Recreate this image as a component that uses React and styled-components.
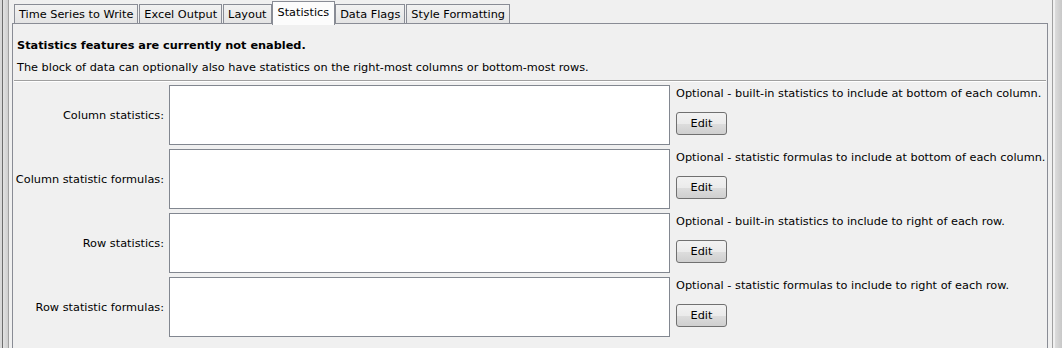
import React from "react";
import styled, { createGlobalStyle } from "styled-components";

const Global = createGlobalStyle`
  html, body { margin: 0; padding: 0; background: #f0f0f0; }
  body { font-family: "DejaVu Sans", Verdana, sans-serif; font-size: 11.3px; color: #000; }
`;

const Window = styled.div`
  display: flex;
  width: 1062px;
  height: 348px;
  overflow: hidden;
  background: #f0f0f0;
`;

const LeftEdge = styled.div`
  width: 9px;
  flex: none;
  box-sizing: border-box;
  border-left: 2px solid #d8d8d8;
  border-right: 1px solid #a0a0a0;
  background: linear-gradient(to right, #6d6d6d 0 1px, #e2e2e2 1px, #cfcfcf 100%);
`;

const RightEdge = styled.div`
  width: 10px;
  flex: none;
  box-sizing: border-box;
  border-left: 1px solid #a0a0a0;
  margin-left: 4px;
  background: linear-gradient(to right, #f0f0f0 0 2px, #dcdcdc 2px, #c8c8c8 100%);
`;

const Main = styled.div`
  flex: 1;
  display: flex;
  flex-direction: column;
  padding-left: 3px;
  min-width: 0;
`;

const TabBar = styled.div`
  display: flex;
  align-items: flex-end;
  height: 24px;
  padding-left: 2px;
  position: relative;
  z-index: 1;
`;

const Tab = styled.div`
  box-sizing: border-box;
  height: ${(p) => (p.$active ? "24px" : "20px")};
  padding: ${(p) => (p.$active ? "4px 5px 0" : "3px 4px 0")};
  margin-right: ${(p) => (p.$active ? "0" : "1px")};
  margin-left: ${(p) => (p.$active ? "-1px" : "0")};
  margin-bottom: ${(p) => (p.$active ? "-1px" : "0")};
  border: 1px solid #898c95;
  border-bottom: ${(p) => (p.$active ? "none" : "1px solid #898c95")};
  background: ${(p) =>
    p.$active ? "#fcfcfc" : "linear-gradient(#f2f2f2, #e4e4e4)"};
  white-space: nowrap;
  line-height: 14px;
`;

const Panel = styled.div`
  flex: 1;
  box-sizing: border-box;
  border: 1px solid #898c95;
  border-bottom: none;
  margin-top: -1px;
  background: #f0f0f0;
  padding: 14px 0 0 4px;
  display: flex;
  flex-direction: column;
`;

const Heading = styled.div`
  font-weight: bold;
  line-height: 16px;
  height: 16px;
`;

const Description = styled.div`
  line-height: 16px;
  margin-top: 6px;
`;

const Separator = styled.div`
  height: 1px;
  background: #a0a0a0;
  border-bottom: 1px solid #ffffff;
  margin: 4px 1px 3px -3px;
`;

const Rows = styled.div`
  display: grid;
  grid-template-columns: 152px 501px 1fr;
  grid-auto-rows: 60px;
  row-gap: 4px;
`;

const Label = styled.div`
  display: flex;
  align-items: center;
  justify-content: flex-end;
  padding-right: 5px;
  white-space: nowrap;
`;

const TextArea = styled.div`
  box-sizing: border-box;
  border: 1px solid #828790;
  background: #ffffff;
`;

const Side = styled.div`
  display: flex;
  flex-direction: column;
  align-items: flex-start;
  padding: 2px 0 0 6px;
  white-space: nowrap;
`;

const Note = styled.div`
  line-height: 14px;
`;

const EditButton = styled.div`
  box-sizing: border-box;
  margin-top: 11px;
  width: 51px;
  height: 23px;
  border: 1px solid #707070;
  border-radius: 3px;
  background: linear-gradient(#f2f2f2 0%, #ebebeb 50%, #dddddd 51%, #cfcfcf 100%);
  display: flex;
  align-items: center;
  justify-content: center;
`;

const tabs = [
  "Time Series to Write",
  "Excel Output",
  "Layout",
  "Statistics",
  "Data Flags",
  "Style Formatting",
];

const rows = [
  ["Column statistics:", "Optional - built-in statistics to include at bottom of each column."],
  ["Column statistic formulas:", "Optional - statistic formulas to include at bottom of each column."],
  ["Row statistics:", "Optional - built-in statistics to include to right of each row."],
  ["Row statistic formulas:", "Optional - statistic formulas to include to right of each row."],
];

export default function App() {
  return (
    <Window>
      <Global />
      <LeftEdge />
      <Main>
        <TabBar>
          {tabs.map((t) => (
            <Tab key={t} $active={t === "Statistics"}>
              {t}
            </Tab>
          ))}
        </TabBar>
        <Panel>
          <Heading>Statistics features are currently not enabled.</Heading>
          <Description>
            The block of data can optionally also have statistics on the right-most columns or bottom-most rows.
          </Description>
          <Separator />
          <Rows>
            {rows.map(([label, note]) => (
              <React.Fragment key={label}>
                <Label>{label}</Label>
                <TextArea />
                <Side>
                  <Note>{note}</Note>
                  <EditButton>Edit</EditButton>
                </Side>
              </React.Fragment>
            ))}
          </Rows>
        </Panel>
      </Main>
      <RightEdge />
    </Window>
  );
}
